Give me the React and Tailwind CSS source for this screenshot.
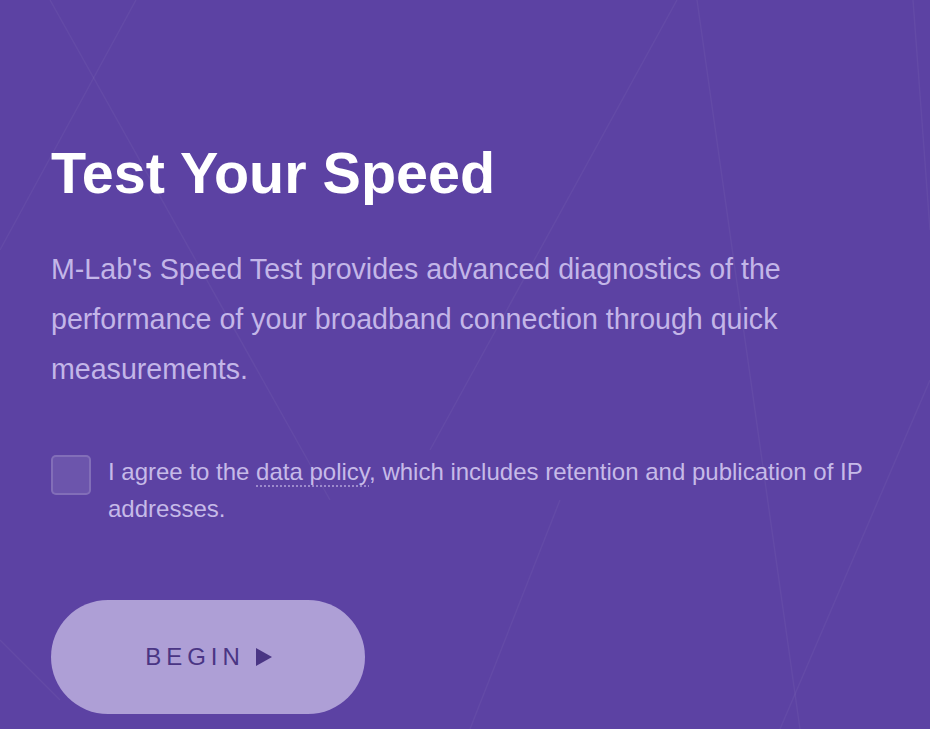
import React, { useState } from "react";

function BackgroundLines() {
  // faint geometric lines behind the panel
  const lines = [
    [50, 0, 330, 500],
    [136, 0, 0, 250],
    [677, 0, 430, 450],
    [697, 0, 800, 729],
    [913, 0, 930, 230],
    [0, 640, 60, 700],
    [930, 380, 780, 729],
    [470, 729, 560, 500],
  ];
  return (
    <svg
      className="absolute inset-0 h-full w-full pointer-events-none"
      viewBox="0 0 930 729"
      preserveAspectRatio="none"
    >
      {lines.map(([x1, y1, x2, y2], i) => (
        <line
          key={i}
          x1={x1}
          y1={y1}
          x2={x2}
          y2={y2}
          stroke="#ffffff"
          strokeOpacity="0.045"
          strokeWidth="1.5"
        />
      ))}
    </svg>
  );
}

export default function App() {
  const [agreed, setAgreed] = useState(false);

  return (
    <div
      className="relative w-full h-[729px] overflow-hidden bg-[#5c42a3]"
      style={{ fontFamily: '"Liberation Sans", Arial, sans-serif' }}
    >
      <BackgroundLines />

      <div className="relative px-[51px] pt-[141px]">
        {/* Heading */}
        <h1 className="text-[57.5px] leading-[65px] font-bold text-white">
          Test Your Speed
        </h1>

        <p className="mt-[38px] max-w-[760px] text-[28.6px] leading-[50px] text-[#c3b6e8]">
          M-Lab's Speed Test provides advanced diagnostics of the performance of
          your broadband connection through quick measurements.
        </p>

        {/* Agreement */}
        <div className="mt-[59px] flex items-start gap-[17px]">
          <button
            type="button"
            onClick={() => setAgreed(!agreed)}
            className="mt-[2px] w-[40px] h-[40px] shrink-0 rounded-[5px] border-2 border-white/15 bg-white/10"
          >
            {agreed && <span className="text-white text-xl">✓</span>}
          </button>
          <p className="max-w-[790px] text-[24px] leading-[37px] text-[#c6bae8]">
            I agree to the{" "}
            <a className="underline decoration-dotted decoration-2 underline-offset-[5px] decoration-[#c6bae8]/60">
              data policy
            </a>
            , which includes retention and publication of IP addresses.
          </p>
        </div>

        {/* Begin */}
        <button
          type="button"
          className="mt-[73px] w-[314px] h-[114px] rounded-full bg-[#ae9fd6] flex items-center justify-center"
        >
          <span className="text-[24px] tracking-[5px] text-[#4a3584] pl-[2px]">
            BEGIN
          </span>
          <svg
            className="ml-[10px]"
            width="18"
            height="20"
            viewBox="0 0 18 20"
          >
            <path d="M1 1 L17 10 L1 19 Z" fill="#4a3584" />
          </svg>
        </button>
      </div>
    </div>
  );
}
